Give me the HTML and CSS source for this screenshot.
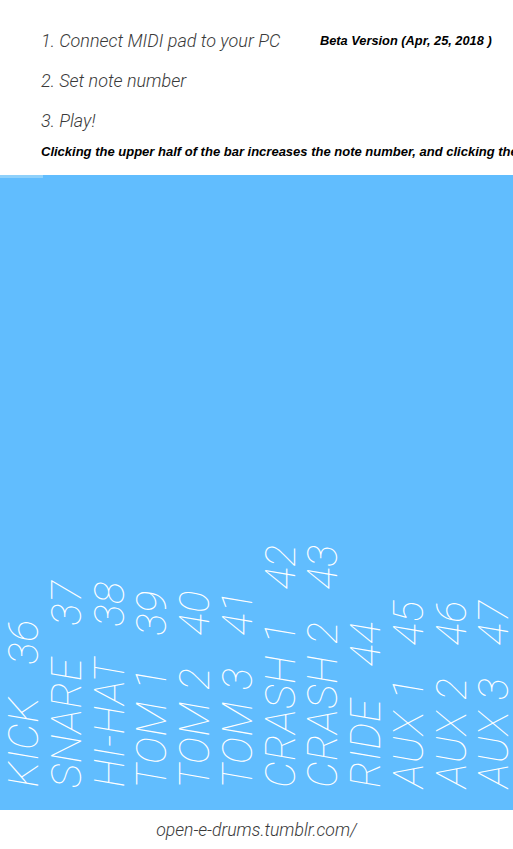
FILE: index.html
```html
<!DOCTYPE html>
<html>
<head>
<meta charset="utf-8">
<link rel="stylesheet" href="styles.css">
</head>
<body>
<header class="intro">
  <div class="step step-first">
    <span class="step-text">1. Connect MIDI pad to your PC</span>
    <span class="beta">Beta Version (Apr, 25, 2018 )</span>
  </div>
  <div class="step"><span class="step-text">2. Set note number</span></div>
  <div class="step"><span class="step-text">3. Play!</span></div>
  <p class="hint">Clicking the upper half of the bar increases the note number, and clicking the lower half decreases it.</p>
</header>
<main class="pads">
  <div class="pad"><div class="level"></div><span class="label">KICK   36</span></div>
  <div class="pad"><span class="label">SNARE   37</span></div>
  <div class="pad"><span class="label">HI-HAT   38</span></div>
  <div class="pad"><span class="label">TOM 1   39</span></div>
  <div class="pad"><span class="label">TOM 2   40</span></div>
  <div class="pad"><span class="label">TOM 3   41</span></div>
  <div class="pad"><span class="label">CRASH 1   42</span></div>
  <div class="pad"><span class="label">CRASH 2   43</span></div>
  <div class="pad"><span class="label">RIDE   44</span></div>
  <div class="pad"><span class="label">AUX 1   45</span></div>
  <div class="pad"><span class="label">AUX 2   46</span></div>
  <div class="pad"><span class="label">AUX 3   47</span></div>
</main>
<footer class="footer">open-e-drums.tumblr.com/</footer>
</body>
</html>
```
FILE: styles.css
```css
html, body {
  margin: 0;
  padding: 0;
  background: #ffffff;
  overflow: hidden;
}
body {
  width: 513px;
  height: 849px;
  font-family: Roboto, "Liberation Sans", sans-serif;
}
.intro {
  height: 175px;
  padding: 21px 0 0 41px;
  box-sizing: border-box;
  overflow: hidden;
}
.step {
  height: 40px;
  line-height: 40px;
  display: flex;
  align-items: center;
  white-space: nowrap;
}
.step-text {
  font-size: 18px;
  font-style: italic;
  font-weight: 300;
  color: #3a3a3a;
}
.step-first .step-text {
  width: 279px;
}
.beta {
  font-family: "Liberation Sans", Arial, sans-serif;
  font-size: 12.8px;
  font-weight: bold;
  font-style: italic;
  color: #000000;
}
.hint {
  margin: 3px 0 0 0;
  font-family: "Liberation Sans", Arial, sans-serif;
  font-size: 13px;
  font-weight: bold;
  font-style: italic;
  color: #000000;
  white-space: nowrap;
}
.pads {
  height: 635px;
  background: #61bdfe;
  display: grid;
  grid-template-columns: repeat(12, 1fr);
}
.pad {
  display: flex;
  flex-direction: column;
  justify-content: flex-end;
  align-items: center;
  padding-bottom: 22px;
  position: relative;
  min-width: 0;
}
.level {
  position: absolute;
  top: 0;
  left: 0;
  right: 0;
  height: 3px;
  background: #8fd1fb;
}
.label {
  writing-mode: vertical-rl;
  transform: translateX(3px) rotate(180deg);
  white-space: pre;
  font-size: 42px;
  line-height: 42.75px;
  letter-spacing: 0.6px;
  font-style: italic;
  font-weight: 100;
  color: #ffffff;
}
.footer {
  height: 39px;
  line-height: 40px;
  text-align: center;
  font-size: 17.6px;
  font-style: italic;
  font-weight: 300;
  color: #3a3a3a;
}
```
